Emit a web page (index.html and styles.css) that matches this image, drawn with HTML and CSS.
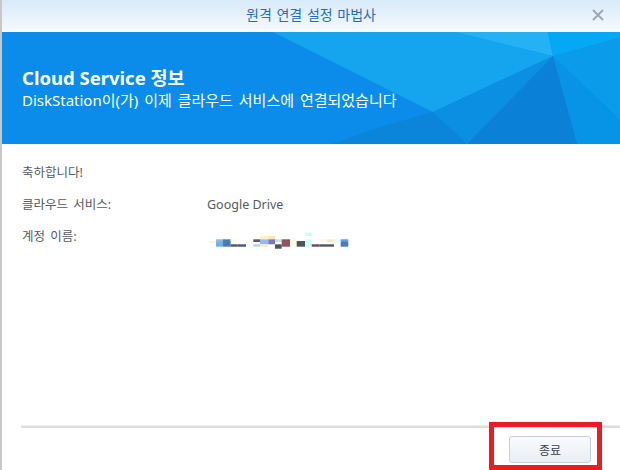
FILE: index.html
```html
<!DOCTYPE html>
<html lang="ko">
<head>
    <meta charset="UTF-8">
    <meta name="viewport" content="width=device-width, initial-scale=1.0">
    <title>원격 연결 설정 마법사</title>
    <link rel="stylesheet" href="styles.css">
</head>
<body>

<div class="window">
    <header class="titlebar">
        <span class="titlebar-spacer"></span>
        <h1 class="titlebar-title">원격 연결 설정 마법사</h1>
        <button class="close-btn" aria-label="닫기">
            <svg width="12" height="12" viewBox="0 0 12 12">
                <path d="M1 1 L11 11 M11 1 L1 11" stroke="#9ba6b1" stroke-width="1.8" fill="none"/>
            </svg>
        </button>
    </header>

    <section class="banner">
        <svg class="banner-bg" viewBox="0 0 618 112" preserveAspectRatio="none">
            <rect width="618" height="112" fill="#0b8ceb"/>
            <polygon points="271,0 431,80 551,24 453,0" fill="#15a5ef"/>
            <polygon points="453,0 546,0 551,24" fill="#25b2f4"/>
            <polygon points="546,0 618,0 618,6 551,24" fill="#04a8f5"/>
            <polygon points="551,24 618,6 618,88" fill="#0a9cea"/>
            <polygon points="551,24 618,88 618,112 575,112" fill="#0894e6"/>
            <polygon points="551,24 575,112 465,112" fill="#0a80d6"/>
            <polygon points="431,80 551,24 465,112" fill="#0a8fe2"/>
            <polygon points="330,112 378,95 431,80 465,112" fill="#0a85da"/>
        </svg>
        <h2 class="banner-title">Cloud Service 정보</h2>
        <p class="banner-sub">DiskStation이(가) 이제 클라우드 서비스에 연결되었습니다</p>
    </section>

    <main class="content">
        <div class="row">축하합니다!</div>
        <div class="row">
            <span class="label">클라우드 서비스:</span>
            <span class="value">Google Drive</span>
        </div>
        <div class="row">
            <span class="label">계정 이름:</span>
            <svg class="masked" width="150" height="24" viewBox="205 226 150 24">
                <rect x="209" y="240" width="7" height="2.3" fill="#fff6dc"/>
                <rect x="216" y="238.3" width="6.7" height="2.7" fill="#8cbbe6"/>
                <rect x="216" y="241" width="6.7" height="4.7" fill="#6cb2ea"/>
                <rect x="222.7" y="238.3" width="8" height="7.4" fill="#4a7cbc"/>
                <rect x="230.7" y="238.3" width="6.6" height="2.7" fill="#fffbe8"/>
                <rect x="230.7" y="243.3" width="6.6" height="2.4" fill="#4e5660"/>
                <rect x="237.3" y="243.3" width="8.7" height="2.4" fill="#4e5478"/>
                <rect x="253.3" y="238.3" width="6.7" height="2.7" fill="#6a5072"/>
                <rect x="253.3" y="243.3" width="6.7" height="2.4" fill="#a6d4f4"/>
                <rect x="260" y="235" width="8.3" height="3.3" fill="#fff0c4"/>
                <rect x="268.3" y="235" width="6.7" height="3.3" fill="#ffe6b0"/>
                <rect x="260" y="238.3" width="8.3" height="5" fill="#8cbcf2"/>
                <rect x="268.3" y="238.3" width="6.7" height="5" fill="#7878ba"/>
                <rect x="260" y="243.3" width="8.3" height="2.4" fill="#ffe8b8"/>
                <rect x="275" y="238.3" width="6.7" height="2.7" fill="#c4e2f8"/>
                <rect x="275" y="243.3" width="6.7" height="4.4" fill="#4e5660"/>
                <rect x="281.7" y="238.3" width="8.3" height="7.4" fill="#925262"/>
                <rect x="290" y="238.3" width="6.7" height="7.4" fill="#fffbe0"/>
                <rect x="296.7" y="240" width="8.3" height="5.7" fill="#4e5660"/>
                <rect x="305" y="231.7" width="6.7" height="3.3" fill="#c8fcff"/>
                <rect x="305" y="238.3" width="6.7" height="7.4" fill="#d2ffff"/>
                <rect x="311.7" y="243.3" width="7.6" height="2.4" fill="#704858"/>
                <rect x="319.3" y="243.3" width="14.7" height="2.4" fill="#4e5660"/>
                <rect x="319.3" y="238.3" width="7.4" height="2.7" fill="#fff8e8"/>
                <rect x="326.7" y="238.3" width="7.3" height="2.7" fill="#ffe8c0"/>
                <rect x="334" y="238.3" width="6.7" height="2.7" fill="#d8ffff"/>
                <rect x="340.7" y="238.3" width="7.6" height="2.7" fill="#5e9ee0"/>
                <rect x="340.7" y="241" width="7.6" height="4.7" fill="#4a7cbc"/>
            </svg>
        </div>
    </main>

    <footer class="footer">
        <div class="divider"></div>
        <div class="actions">
            <button class="btn">종료</button>
        </div>
    </footer>

    <div class="highlight"></div>
</div>

</body>
</html>
```

FILE: styles.css
```css
body {
    margin: 0;
    padding: 0;
    background: #fff;
    font-family: "Noto Sans", "Noto Sans CJK KR", sans-serif;
}

.window {
    position: relative;
    width: 618px;
    height: 470px;
    border-left: 2px solid #c8c8c8;
    display: flex;
    flex-direction: column;
    background: #fff;
    overflow: hidden;
}

.titlebar {
    height: 32px;
    flex: none;
    display: grid;
    grid-template-columns: 40px 1fr 40px;
    align-items: center;
    background: linear-gradient(to bottom, #d7eaf9, #f6fafd);
}

.titlebar-title {
    margin: 0;
    text-align: center;
    font-size: 14px;
    font-weight: normal;
    color: #1c6fc4;
    line-height: 20px;
    padding-bottom: 2px;
    word-spacing: 1px;
}

.close-btn {
    border: none;
    background: none;
    padding: 0;
    width: 12px;
    height: 12px;
    justify-self: end;
    margin-right: 16px;
    margin-bottom: 2px;
    display: flex;
}

.banner {
    position: relative;
    height: 112px;
    flex: none;
    box-sizing: border-box;
    padding: 34px 0 0 20px;
    color: #fff;
    overflow: hidden;
}

.banner-bg {
    position: absolute;
    top: 0;
    left: 0;
    width: 100%;
    height: 100%;
    z-index: 0;
}

.banner-title,
.banner-sub {
    position: relative;
    margin: 0;
}

.banner-title {
    font-size: 18.5px;
    font-weight: bold;
    line-height: 24px;
}

.banner-sub {
    font-size: 15px;
    line-height: 20px;
    word-spacing: 2px;
}

.content {
    flex: 1;
    padding: 19px 20px 0 20px;
    display: flex;
    flex-direction: column;
    gap: 12px;
    font-size: 12.5px;
    word-spacing: 2px;
    color: #555b62;
}

.row {
    display: flex;
    line-height: 20px;
}

.label {
    width: 185px;
}

.value {
    font-size: 12.5px;
    word-spacing: 0;
}

.masked {
    display: block;
    margin-left: -2px;
}

.footer {
    flex: none;
}

.divider {
    margin-left: 19px;
    height: 2px;
    border-top: 1px solid #efefef;
    background: #dedede;
}

.actions {
    display: flex;
    justify-content: flex-end;
    padding: 8px 29px 7px 0;
}

.btn {
    width: 82px;
    height: 27px;
    border: 1px solid #c6cfd9;
    border-radius: 3px;
    background: linear-gradient(to bottom, #f9fbfd, #e9eff5);
    font-family: "Noto Sans", "Noto Sans CJK KR", sans-serif;
    font-size: 12px;
    color: #3a3f45;
    cursor: pointer;
}

.highlight {
    position: absolute;
    left: 487px;
    top: 422px;
    width: 113px;
    height: 48px;
    box-sizing: border-box;
    border: 5px solid #ec1c24;
    pointer-events: none;
}
```
